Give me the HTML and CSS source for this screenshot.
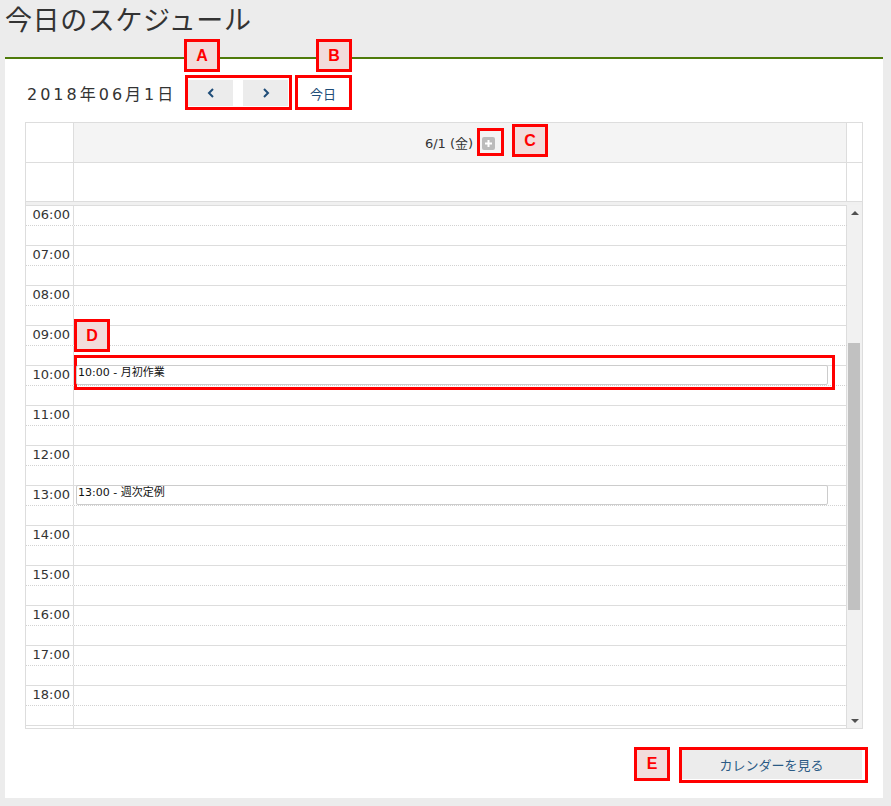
FILE: index.html
```html
<!DOCTYPE html>
<html lang="ja">
<head>
<meta charset="utf-8">
<title>今日のスケジュール</title>
<link rel="stylesheet" href="styles.css">
</head>
<body>
<h1 class="title">今日のスケジュール</h1>
<div class="panel">
  <div class="toolbar">
    <span class="date">2018年06月1日</span>
    <button class="btn nav-btn" aria-label="前へ"><svg width="8" height="10" viewBox="0 0 8 10"><polyline points="6,1 2,5 6,9" fill="none" stroke="#1f4d78" stroke-width="2"/></svg></button>
    <button class="btn nav-btn next" aria-label="次へ"><svg width="8" height="10" viewBox="0 0 8 10"><polyline points="2,1 6,5 2,9" fill="none" stroke="#1f4d78" stroke-width="2"/></svg></button>
    <button class="btn today">今日</button>
  </div>

  <div class="cal">
    <div class="cal-head">
      <div class="c-time"></div>
      <div class="c-day head-day">6/1 (金)<svg class="plus" width="13" height="13" viewBox="0 0 13 13"><rect width="13" height="13" rx="2" fill="#bbbbbb"/><path d="M6.5 3v7M3 6.5h7" stroke="#fff" stroke-width="2"/></svg></div>
      <div class="c-sb"></div>
    </div>
    <div class="cal-allday">
      <div class="c-time"></div>
      <div class="c-day"></div>
      <div class="c-sb"></div>
    </div>
    <div class="divider"></div>
    <div class="cal-body">
      <div class="grid">
        <div class="slot"><div class="t">06:00</div><div class="d"></div></div>
        <div class="slot half"><div class="t"></div><div class="d"></div></div>
        <div class="slot"><div class="t">07:00</div><div class="d"></div></div>
        <div class="slot half"><div class="t"></div><div class="d"></div></div>
        <div class="slot"><div class="t">08:00</div><div class="d"></div></div>
        <div class="slot half"><div class="t"></div><div class="d"></div></div>
        <div class="slot"><div class="t">09:00</div><div class="d"></div></div>
        <div class="slot half"><div class="t"></div><div class="d"></div></div>
        <div class="slot"><div class="t">10:00</div><div class="d"><div class="event">10:00 - 月初作業</div></div></div>
        <div class="slot half"><div class="t"></div><div class="d"></div></div>
        <div class="slot"><div class="t">11:00</div><div class="d"></div></div>
        <div class="slot half"><div class="t"></div><div class="d"></div></div>
        <div class="slot"><div class="t">12:00</div><div class="d"></div></div>
        <div class="slot half"><div class="t"></div><div class="d"></div></div>
        <div class="slot"><div class="t">13:00</div><div class="d"><div class="event">13:00 - 週次定例</div></div></div>
        <div class="slot half"><div class="t"></div><div class="d"></div></div>
        <div class="slot"><div class="t">14:00</div><div class="d"></div></div>
        <div class="slot half"><div class="t"></div><div class="d"></div></div>
        <div class="slot"><div class="t">15:00</div><div class="d"></div></div>
        <div class="slot half"><div class="t"></div><div class="d"></div></div>
        <div class="slot"><div class="t">16:00</div><div class="d"></div></div>
        <div class="slot half"><div class="t"></div><div class="d"></div></div>
        <div class="slot"><div class="t">17:00</div><div class="d"></div></div>
        <div class="slot half"><div class="t"></div><div class="d"></div></div>
        <div class="slot"><div class="t">18:00</div><div class="d"></div></div>
        <div class="slot half"><div class="t"></div><div class="d"></div></div>
        <div class="slot"><div class="t"></div><div class="d"></div></div>
      </div>
      <div class="sb">
        <div class="sb-btn"><svg width="8" height="4" viewBox="0 0 8 4"><polygon points="0,4 4,0 8,4" fill="#505050"/></svg></div>
        <div class="sb-track"><div class="sb-thumb"></div></div>
        <div class="sb-btn"><svg width="8" height="4" viewBox="0 0 8 4"><polygon points="0,0 8,0 4,4" fill="#505050"/></svg></div>
      </div>
    </div>
  </div>

  <div class="footer">
    <button class="btn cal-link">カレンダーを見る</button>
  </div>
</div>

<div class="ann lbl lbl-a">A</div>
<div class="ann box box-a"></div>
<div class="ann lbl lbl-b">B</div>
<div class="ann box box-b"></div>
<div class="ann lbl lbl-c">C</div>
<div class="ann box box-c"></div>
<div class="ann lbl lbl-d">D</div>
<div class="ann box box-d"></div>
<div class="ann lbl lbl-e">E</div>
<div class="ann box box-e"></div>
</body>
</html>
```

FILE: styles.css
```css
* { box-sizing: border-box; }

html, body {
  margin: 0;
  padding: 0;
}

body {
  position: relative;
  width: 891px;
  height: 806px;
  background: #ececec;
  font-family: "DejaVu Sans", "Noto Sans CJK JP", sans-serif;
  color: #333;
  overflow: hidden;
}

.title {
  margin: 0;
  height: 57px;
  padding: 1px 0 0 5px;
  font-family: "Noto Sans CJK JP", sans-serif;
  font-size: 27px;
  font-weight: normal;
  letter-spacing: 0.6px;
  line-height: 36px;
  color: #333;
}

.panel {
  margin-left: 5px;
  width: 878px;
  height: 741px;
  background: #fff;
  border-top: 2px solid #4f7b0b;
  padding: 21px 20px 0 20px;
}

.toolbar {
  display: flex;
  align-items: center;
  height: 26px;
}

.date {
  width: 163px;
  font-size: 16px;
  letter-spacing: 3px;
  color: #333;
  padding-left: 2px;
  white-space: nowrap;
}

.btn {
  border: 0;
  margin: 0;
  padding: 0;
  font-family: "Noto Sans CJK JP", sans-serif;
  color: #1f4d78;
  display: flex;
  align-items: center;
  justify-content: center;
}

.nav-btn {
  width: 45px;
  height: 26px;
  background: #ececec;
}

.nav-btn.next {
  margin-left: 10px;
}

.today {
  margin-left: 11px;
  width: 48px;
  height: 26px;
  background: #fff;
  font-size: 13px;
}

/* calendar */
.cal {
  margin-top: 16px;
  width: 838px;
  border: 1px solid #dddddd;
}

.cal-head,
.cal-allday {
  display: flex;
}

.cal-head {
  height: 40px;
  border-bottom: 1px solid #dddddd;
}

.cal-allday {
  height: 38px;
}

.c-time {
  width: 48px;
  border-right: 1px solid #dddddd;
}

.c-day {
  flex: 1;
  border-right: 1px solid #dddddd;
}

.c-sb {
  width: 15px;
}

.head-day {
  background: #f4f4f4;
  display: flex;
  align-items: center;
  justify-content: center;
  font-size: 13px;
  color: #333;
}

.plus {
  margin-left: 9px;
  margin-top: 1px;
}

.divider {
  height: 4px;
  border-top: 1px solid #dddddd;
  background: #f0f0f0;
}

.cal-body {
  display: flex;
  height: 523px;
  overflow: hidden;
}

.grid {
  flex: 1;
}

.slot {
  display: flex;
  height: 20px;
  border-top: 1px solid #dddddd;
}

.slot.half {
  border-top: 1px dotted #d2d2d2;
}

.t {
  width: 48px;
  border-right: 1px solid #dddddd;
  font-size: 13px;
  line-height: 18px;
  text-align: right;
  padding-right: 3px;
  color: #333;
}

.d {
  flex: 1;
  position: relative;
  border-right: 1px solid #dddddd;
}

.event {
  position: absolute;
  top: -1px;
  left: 2px;
  right: 18px;
  height: 20px;
  background: #fff;
  border: 1px solid #cccccc;
  border-radius: 2px;
  font-size: 11px;
  line-height: 13px;
  padding: 0 1px;
  color: #111;
  z-index: 1;
}

/* fake scrollbar */
.sb {
  width: 15px;
  background: #f1f1f1;
  display: flex;
  flex-direction: column;
}

.sb-btn {
  height: 15px;
  display: flex;
  align-items: center;
  justify-content: center;
}

.sb-track {
  flex: 1;
}

.sb-thumb {
  margin: 123px 2px 0 1px;
  height: 267px;
  background: #c1c1c1;
}

.footer {
  display: flex;
  justify-content: flex-end;
  margin-top: 21px;
  padding-right: 1px;
}

.cal-link {
  width: 181px;
  height: 29px;
  background: #ececec;
  font-size: 13px;
  color: #2a5a85;
}

/* annotation overlays */
.ann {
  position: absolute;
  border: 3px solid #ff0000;
}

.lbl {
  background: #f2dcdb;
  color: #ff0000;
  font-family: "Liberation Sans", Arial, sans-serif;
  font-weight: bold;
  font-size: 16px;
  display: flex;
  align-items: center;
  justify-content: center;
}

.box { background: transparent; }

.lbl-a { left: 184px; top: 39px; width: 36px; height: 33px; }
.box-a { left: 185px; top: 75px; width: 107px; height: 35px; }
.lbl-b { left: 316px; top: 39px; width: 36px; height: 33px; }
.box-b { left: 295px; top: 75px; width: 57px; height: 35px; }
.lbl-c { left: 512px; top: 124px; width: 36px; height: 33px; }
.box-c { left: 477px; top: 128px; width: 27px; height: 28px; }
.lbl-d { left: 74px; top: 319px; width: 36px; height: 33px; }
.box-d { left: 74px; top: 355px; width: 761px; height: 35px; }
.lbl-e { left: 634px; top: 747px; width: 36px; height: 34px; }
.box-e { left: 679px; top: 747px; width: 189px; height: 36px; }
```
